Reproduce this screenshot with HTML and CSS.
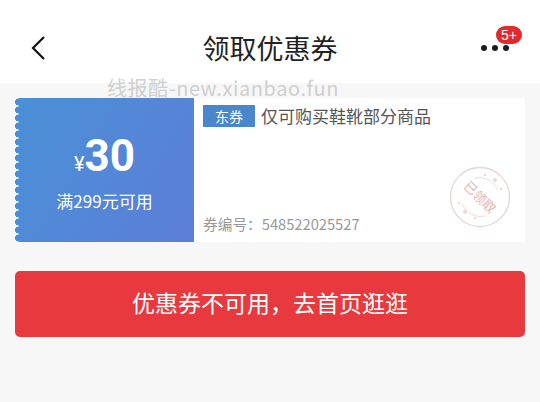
FILE: index.html
```html
<!DOCTYPE html>
<html lang="zh-CN">
<head>
    <meta charset="UTF-8">
    <meta name="viewport" content="width=device-width, initial-scale=1.0">
    <title>领取优惠券</title>
    <link rel="stylesheet" href="styles.css">
</head>
<body>
    <header class="nav">
        <svg class="nav-back" width="16" height="26" viewBox="0 0 16 26">
            <path d="M14 2 L3 13 L14 24" fill="none" stroke="#111" stroke-width="2.2"/>
        </svg>
        <h1 class="nav-title">领取优惠券</h1>
        <div class="nav-more">
            <span class="dot"></span>
            <span class="dot"></span>
            <span class="dot"></span>
            <span class="badge">5+</span>
        </div>
    </header>

    <div class="watermark">线报酷-new.xianbao.fun</div>

    <main class="content">
        <section class="coupon">
            <div class="coupon-left">
                <div class="price"><span class="currency">¥</span><span class="amount">30</span></div>
                <div class="condition">满299元可用</div>
            </div>
            <div class="coupon-right">
                <div class="coupon-head">
                    <span class="tag">东券</span>
                    <span class="coupon-name">仅可购买鞋靴部分商品</span>
                </div>
                <div class="coupon-code">券编号：548522025527</div>
                <svg class="stamp" width="64" height="64" viewBox="0 0 64 64">
                    <circle cx="32" cy="32" r="29.5" fill="none" stroke="#e8d3d3" stroke-width="1.3"/>
                    <path d="M14 38 A20 20 0 0 0 38 51" fill="none" stroke="#ecdcdc" stroke-width="1"/>
                    <path d="M26 13 A20 20 0 0 1 50 26" fill="none" stroke="#ecdcdc" stroke-width="1"/>
                    <circle cx="37" cy="10" r="1.2" fill="#ecd6d6"/>
                    <circle cx="47" cy="15" r="2" fill="#ecd6d6"/>
                    <circle cx="53" cy="24" r="1.2" fill="#ecd6d6"/>
                    <circle cx="11" cy="38" r="1.2" fill="#ecd6d6"/>
                    <circle cx="17" cy="47" r="2" fill="#ecd6d6"/>
                    <circle cx="27" cy="53" r="1.2" fill="#ecd6d6"/>
                    <text class="stamp-text" x="32" y="37" transform="rotate(45 32 32)" text-anchor="middle">已领取</text>
                </svg>
            </div>
        </section>

        <button class="action">优惠券不可用，去首页逛逛</button>
    </main>
</body>
</html>
```

FILE: styles.css
```css
* {
    box-sizing: border-box;
}

body {
    margin: 0;
    width: 540px;
    height: 402px;
    overflow: hidden;
    position: relative;
    background-color: #f7f7f7;
    font-family: "Noto Sans CJK SC", "Liberation Sans", sans-serif;
}

.nav {
    height: 83px;
    padding: 12px 30px 0;
    background-color: #fff;
    display: grid;
    grid-template-columns: 1fr auto 1fr;
    align-items: center;
}

.nav-back {
    display: block;
}

.nav-title {
    margin: 0;
    font-size: 27px;
    font-weight: 400;
    color: #222;
}

.nav-more {
    position: relative;
    justify-self: end;
    display: flex;
    gap: 5px;
    margin-right: 1px;
}

.dot {
    width: 6px;
    height: 6px;
    border-radius: 50%;
    background-color: #1c1c1c;
}

.badge {
    position: absolute;
    left: 15px;
    top: -19px;
    width: 26px;
    height: 18px;
    border-radius: 9px;
    background-color: #e2292c;
    color: #fff;
    font-size: 14px;
    line-height: 18px;
    text-align: center;
    font-family: "Liberation Sans", sans-serif;
}

.watermark {
    position: absolute;
    left: 107px;
    top: 73px;
    font-size: 20px;
    line-height: 29px;
    letter-spacing: 0.55px;
    color: #cfcfcf;
    white-space: nowrap;
}

.content {
    padding: 15px 15px 0;
}

.coupon {
    height: 144px;
    display: flex;
    background-color: #fff;
}

.coupon-left {
    position: relative;
    width: 179px;
    background: linear-gradient(120deg, #4a90d6 0%, #5c7ed8 100%);
    color: #fff;
    display: flex;
    flex-direction: column;
    align-items: center;
}

/* scalloped edge */
.coupon-left::before {
    content: "";
    position: absolute;
    left: 0;
    top: 0;
    bottom: 0;
    width: 4px;
    background-image: radial-gradient(circle at 3.5px 4px, #4a8fd6 3.2px, #f7f7f7 3.8px);
    background-size: 4px 8px;
}

.price {
    margin-top: 30px;
    height: 56px;
    display: flex;
    align-items: baseline;
    color: #fff;
    font-family: Roboto, "Liberation Sans", sans-serif;
}

.currency {
    font-size: 20px;
}

.amount {
    font-size: 44px;
    font-weight: 700;
    line-height: 56px;
}

.condition {
    margin-top: 5px;
    font-size: 17px;
    line-height: 24px;
}

.coupon-right {
    position: relative;
    flex: 1;
    padding: 7px 0 0 9px;
}

.coupon-head {
    display: flex;
    align-items: flex-start;
    height: 22px;
}

.tag {
    width: 52px;
    height: 22px;
    background-color: #4a86cc;
    color: #fff;
    font-size: 14px;
    line-height: 22px;
    text-align: center;
}

.coupon-name {
    margin-left: 6px;
    font-size: 17px;
    line-height: 22px;
    color: #555;
}

.coupon-code {
    margin-top: 87px;
    font-size: 14.7px;
    line-height: 20px;
    color: #999;
}

.stamp {
    position: absolute;
    left: 254px;
    top: 67px;
}

.stamp-text {
    font-size: 13px;
    fill: #e3b4b4;
}

.action {
    display: block;
    width: 100%;
    height: 66px;
    margin-top: 29px;
    padding-bottom: 5px;
    border: none;
    border-radius: 5px;
    background-color: #e8393e;
    color: #fff;
    font-family: inherit;
    font-size: 23px;
}
```
